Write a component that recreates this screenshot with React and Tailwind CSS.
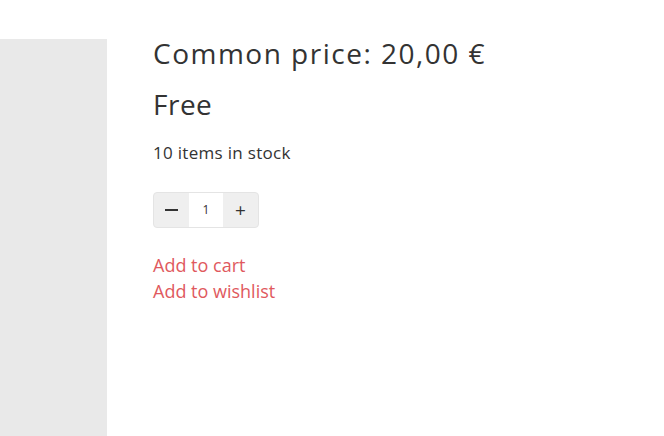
export default function App() {
  return (
    <div className="w-[664px] h-[436px] bg-white flex overflow-hidden" style={{ fontFamily: "'Open Sans', 'Noto Sans', sans-serif" }}>
      <div className="w-[107px] mt-[39px] bg-[#e9e9e9] shrink-0"></div>
      <div className="pl-[46px] pt-[35px] text-[#333]">
        <p className="text-[28px] leading-[36px] tracking-[1.5px]">Common price: 20,00 €</p>
        <p className="text-[28px] leading-[36px] mt-[15px] tracking-[0.5px]">Free</p>
        <p className="text-[17px] leading-[24px] mt-[19px] tracking-[0.3px]">10 items in stock</p>
        <div className="mt-[27px] flex w-[106px] h-[36px] rounded border border-[#e4e4e4] bg-[#efefef] overflow-hidden">
          <button className="w-[35px] flex items-center justify-center">
            <span className="block w-[13px] h-[2px] bg-[#333]"></span>
          </button>
          <input className="w-[34px] bg-white text-center text-[12px] text-[#333] outline-none" defaultValue="1" />
          <button className="w-[35px] flex items-center justify-center text-[19px] text-[#333]">+</button>
        </div>
        <div className="mt-[24px] flex flex-col text-[18px] leading-[26px] text-[#e0595e]">
          <a href="#">Add to cart</a>
          <a href="#">Add to wishlist</a>
        </div>
      </div>
    </div>
  )
}
